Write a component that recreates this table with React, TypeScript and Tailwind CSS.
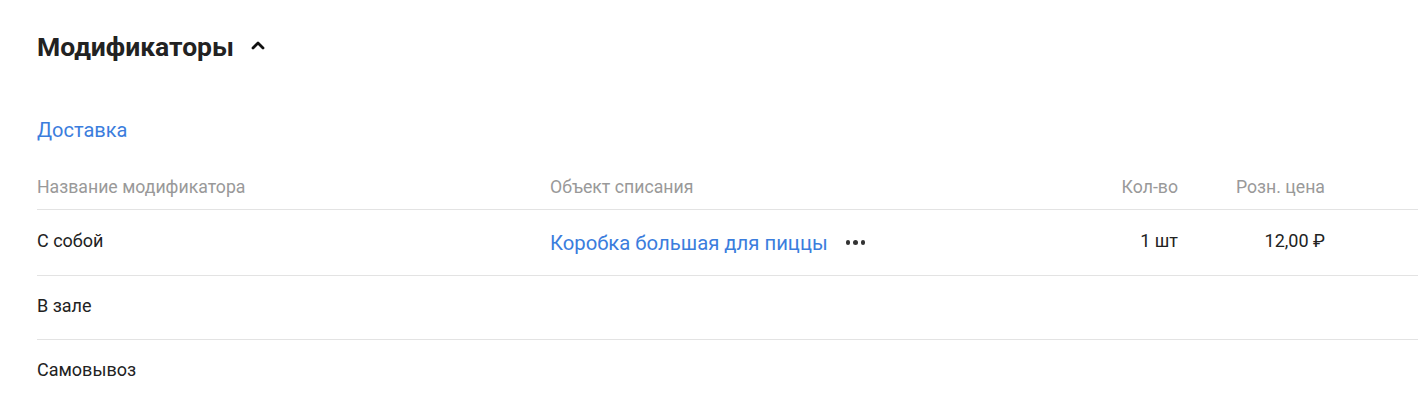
const rows = [
  { name: 'С собой', object: 'Коробка большая для пиццы', qty: '1 шт', price: '12,00 ₽' },
  { name: 'В зале' },
  { name: 'Самовывоз' },
]

export default function App() {
  return (
    <div className="min-h-[400px] bg-white pl-[37px] pt-[33px] font-['Roboto',sans-serif] text-[#222]">
      <div className="flex items-center gap-[17px] h-[28px]">
        <h2 className="text-[26.5px] font-bold leading-none">Модификаторы</h2>
        <svg width="14" height="10" viewBox="0 0 14 10" className="mt-[-4px]">
          <path d="M2 8 L7 3 L12 8" fill="none" stroke="#111" strokeWidth="2.8" strokeLinecap="round" strokeLinejoin="round" />
        </svg>
      </div>

      <div className="mt-[57px] text-[20px] leading-[24px] text-[#3b7ddd]">Доставка</div>

      <div className="mt-[35px] grid grid-cols-[513px_1fr_128px_147px_93px] text-[17.7px] leading-[20px] text-[#999] h-[33px] items-start border-b border-[#e3e3e3]">
        <div>Название модификатора</div>
        <div>Объект списания</div>
        <div className="text-right">Кол-во</div>
        <div className="text-right">Розн. цена</div>
        <div />
      </div>

      {rows.map((r, i) => (
        <div
          key={r.name}
          className={`grid grid-cols-[513px_1fr_128px_147px_93px] items-center text-[18px] leading-[22px] ${
            i === 0 ? 'h-[66px] border-b border-[#e3e3e3]' : i === 1 ? 'h-[64px] border-b border-[#e3e3e3]' : 'h-[62px]'
          }`}
        >
          <div className="mt-[-3px]">{r.name}</div>
          <div className="flex items-center">
            {r.object && (
              <>
                <span className="text-[20.3px] text-[#3b7ddd]">{r.object}</span>
                <span className="ml-[18px] flex gap-[3px]">
                  <span className="w-[4.5px] h-[4.5px] rounded-full bg-[#333]" />
                  <span className="w-[4.5px] h-[4.5px] rounded-full bg-[#333]" />
                  <span className="w-[4.5px] h-[4.5px] rounded-full bg-[#333]" />
                </span>
              </>
            )}
          </div>
          <div className="text-right mt-[-3px]">{r.qty}</div>
          <div className="text-right mt-[-3px]">{r.price}</div>
          <div />
        </div>
      ))}
    </div>
  )
}
